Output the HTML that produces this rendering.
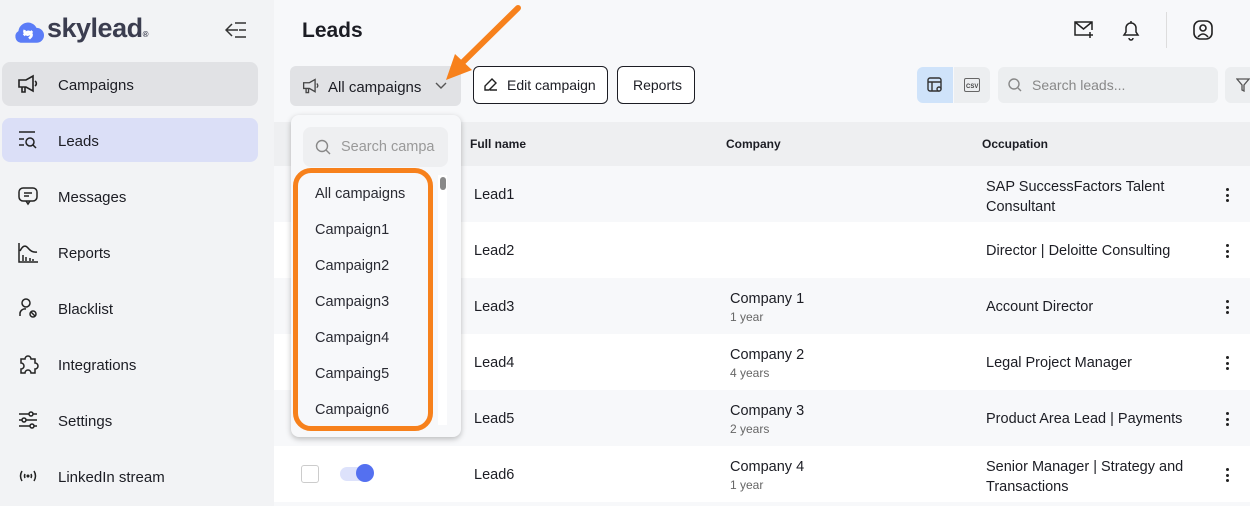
<!DOCTYPE html>
<html><head><meta charset="utf-8"><style>
*{box-sizing:border-box;margin:0;padding:0}
body{width:1250px;height:506px;overflow:hidden;background:#f7f8fa;font-family:"Liberation Sans",sans-serif;color:#1c1d24;position:relative}
.side{position:absolute;left:0;top:0;width:274px;height:506px;background:#f2f3f5}
.nav{position:absolute;left:2px;width:256px;height:44px;border-radius:8px;font-size:15px;display:flex;align-items:center;padding-left:56px;padding-top:2px}
.nav svg{position:absolute;left:15px;top:11px}
.abs{position:absolute}
.btn{position:absolute;top:66px;height:38px;border:1px solid #1c1d24;border-radius:6px;font-size:14px;display:flex;align-items:center;background:#fff}
.row{position:absolute;left:274px;width:976px;height:56px}
.t{position:absolute;font-size:14.5px}
.s{position:absolute;font-size:12px;color:#666}
.dots{position:absolute;left:1226px;width:4px}
.dots i{display:block;width:3px;height:3px;background:#222;border-radius:50%;margin-bottom:2.5px}
.dd{position:absolute;font-size:14.5px;left:315px;color:#2a2b33}
</style></head><body>
<div class="side">
 <svg class="abs" style="left:12px;top:16px" width="32" height="28" viewBox="0 0 30 26"><path d="M8 25h15a7 7 0 0 0 0-14 9 9 0 0 0-17 3A6 6 0 0 0 8 25z" fill="#5b7cf7"/><path d="M11 18l3-3a3 3 0 0 1 4 4l-2 2M19 14l-3 3a3 3 0 0 1-4-4" stroke="#fff" stroke-width="2.4" fill="none"/></svg>
 <div class="abs" style="left:47px;top:13px;font-size:27px;font-weight:bold;color:#3b3d4f;letter-spacing:-0.5px">skylead<span style="font-size:8px">®</span></div>
 <svg class="abs" style="left:225px;top:22px" width="22" height="16" viewBox="0 0 22 16" fill="none" stroke="#333" stroke-width="1.5"><path d="M7 2L1 8l6 6M1 8h12M10 1h11M14 8h7M10 15h11"/></svg>
 <div class="nav" style="top:62px;background:#e1e2e5"><svg width="22" height="22" viewBox="0 0 22 22" fill="none" stroke="#222" stroke-width="1.6"><path d="M2 7h7l7-4v15l-7-4H2zM5 14v5h3v-5M18 8a3 3 0 0 1 0 5"/></svg>Campaigns</div>
 <div class="nav" style="top:118px;background:#dbdff7"><svg width="22" height="22" viewBox="0 0 22 22" fill="none" stroke="#222" stroke-width="1.5"><path d="M2 3h16M2 10h5M2 16h5"/><circle cx="13" cy="13" r="4"/><path d="M16 16l3 3"/></svg>Leads</div>
 <div class="nav" style="top:174px"><svg width="22" height="22" viewBox="0 0 22 22" fill="none" stroke="#222" stroke-width="1.5"><rect x="2" y="3" width="18" height="13" rx="4"/><path d="M7 8h8M7 11h5M9 16l2 3 2-3"/></svg>Messages</div>
 <div class="nav" style="top:230px"><svg width="22" height="22" viewBox="0 0 22 22" fill="none" stroke="#222" stroke-width="1.5"><path d="M2 2v19h19M3 10q4-8 8-3t9 4M6 20v-6M9 20v-4M13 20v-3M16 20v-2"/></svg>Reports</div>
 <div class="nav" style="top:286px"><svg width="22" height="22" viewBox="0 0 22 22" fill="none" stroke="#222" stroke-width="1.5"><circle cx="9" cy="6" r="4"/><path d="M3 19v-3a5 5 0 0 1 6-4"/><circle cx="16" cy="17" r="3"/><path d="M14 15l4 4"/></svg>Blacklist</div>
 <div class="nav" style="top:342px"><svg width="22" height="22" viewBox="0 0 22 22" fill="none" stroke="#222" stroke-width="1.5"><path d="M4 6h4a3 3 0 0 1 6 0h4v4a3 3 0 0 1 0 6v4h-4a3 3 0 0 0-6 0H4v-4a3 3 0 0 0 0-6z"/></svg>Integrations</div>
 <div class="nav" style="top:398px"><svg width="22" height="22" viewBox="0 0 22 22" fill="none" stroke="#222" stroke-width="1.5"><path d="M2 5h18M2 11h18M2 17h18"/><circle cx="14" cy="5" r="2" fill="#f2f3f5"/><circle cx="7" cy="11" r="2" fill="#f2f3f5"/><circle cx="15" cy="17" r="2" fill="#f2f3f5"/></svg>Settings</div>
 <div class="nav" style="top:454px"><svg width="22" height="22" viewBox="0 0 22 22" fill="none" stroke="#222" stroke-width="1.5"><path d="M5 6q-3 5 0 10M17 6q3 5 0 10M8 9q-1 2 0 4M14 9q1 2 0 4"/><circle cx="11" cy="11" r="0.8" fill="#222"/></svg>LinkedIn stream</div>
</div>

<div class="abs" style="left:302px;top:19px;font-size:21px;font-weight:bold">Leads</div>
<svg class="abs" style="left:1073px;top:20px" width="22" height="20" viewBox="0 0 22 20" fill="none" stroke="#222" stroke-width="1.5"><path d="M14 15H2V2h17v8M2 2l8.5 7L19 2M17 12v6M14 15h6"/></svg>
<svg class="abs" style="left:1121px;top:19px" width="20" height="22" viewBox="0 0 20 22" fill="none" stroke="#222" stroke-width="1.5"><path d="M3 16h14l-2-3V9a5 5 0 0 0-10 0v4zM8 19a2 2 0 0 0 4 0M10 2v2"/></svg>
<div class="abs" style="left:1166px;top:12px;width:1px;height:36px;background:#ddd"></div>
<svg class="abs" style="left:1192px;top:19px" width="22" height="22" viewBox="0 0 22 22" fill="none" stroke="#222" stroke-width="1.6"><rect x="2" y="2" width="18" height="18" rx="6"/><circle cx="11" cy="9" r="3"/><path d="M6 18q5-6 10 0"/></svg>

<div class="abs" style="left:290px;top:66px;width:171px;height:40px;background:#e1e2e5;border-radius:6px;font-size:15px;display:flex;align-items:center;padding-left:38px;padding-top:2px">All campaigns</div>
<svg class="abs" style="left:302px;top:77px" width="18" height="18" viewBox="0 0 22 22" fill="none" stroke="#444" stroke-width="1.6"><path d="M2 7h7l7-4v15l-7-4H2zM5 14v5h3v-5M18 8a3 3 0 0 1 0 5"/></svg>
<svg class="abs" style="left:435px;top:82px" width="12" height="8" viewBox="0 0 12 8" fill="none" stroke="#555" stroke-width="1.4"><path d="M1 1l5 5 5-5"/></svg>
<div class="btn" style="left:473px;width:135px;padding-left:33px">Edit campaign</div>
<svg class="abs" style="left:483px;top:77px" width="15" height="15" viewBox="0 0 15 15" fill="none" stroke="#222" stroke-width="1.4"><path d="M9 2l4 4-7 7H2V9zM7 13h7"/></svg>
<div class="btn" style="left:617px;width:78px;padding-left:15px">Reports</div>

<div class="abs" style="left:917px;top:67px;width:36px;height:36px;background:#cfe3fa;border-radius:6px 0 0 6px"></div>
<div class="abs" style="left:954px;top:67px;width:36px;height:36px;background:#eceef0;border-radius:0 6px 6px 0"></div>
<svg class="abs" style="left:927px;top:77px" width="16" height="16" viewBox="0 0 16 16" fill="none" stroke="#333" stroke-width="1.4"><rect x="1" y="1" width="13" height="13" rx="2"/><path d="M1 5h13M5 5v9"/><circle cx="12" cy="12" r="2" fill="#cfe3fa"/></svg>
<div class="abs" style="left:964px;top:78px;font-size:6px;font-weight:bold;color:#444;border:1px solid #666;border-radius:2px;padding:5px 1px 1px">CSV</div>
<div class="abs" style="left:998px;top:67px;width:220px;height:36px;background:#eceef0;border-radius:6px;font-size:14px;color:#888;padding:10px 0 0 34px">Search leads...</div>
<svg class="abs" style="left:1008px;top:78px" width="14" height="14" viewBox="0 0 14 14" fill="none" stroke="#888" stroke-width="1.4"><circle cx="6" cy="6" r="5"/><path d="M10 10l3 3"/></svg>
<div class="abs" style="left:1225px;top:67px;width:30px;height:36px;background:#eceef0;border-radius:6px"></div>
<svg class="abs" style="left:1236px;top:78px" width="14" height="14" viewBox="0 0 14 14" fill="none" stroke="#555" stroke-width="1.3"><path d="M1 1h12L8 7v6l-2-1V7z"/></svg>

<div class="row" style="top:122px;height:44px;background:#eeeff1"></div>
<div class="t" style="left:470px;top:137px;font-size:12px;font-weight:bold">Full name</div>
<div class="t" style="left:726px;top:137px;font-size:12px;font-weight:bold">Company</div>
<div class="t" style="left:982px;top:137px;font-size:12px;font-weight:bold">Occupation</div>

<div class="row" style="top:166px;background:#f7f8fa"></div>
<div class="row" style="top:222px;background:#fff"></div>
<div class="row" style="top:278px;background:#f7f8fa"></div>
<div class="row" style="top:334px;background:#fff"></div>
<div class="row" style="top:390px;background:#f7f8fa"></div>
<div class="row" style="top:446px;background:#fff"></div>

<div class="t" style="left:474px;top:187px">Lead1</div>
<div class="t" style="left:474px;top:243px">Lead2</div>
<div class="t" style="left:474px;top:299px">Lead3</div>
<div class="t" style="left:474px;top:355px">Lead4</div>
<div class="t" style="left:474px;top:411px">Lead5</div>
<div class="t" style="left:474px;top:467px">Lead6</div>

<div class="t" style="left:730px;top:291px">Company 1</div><div class="s" style="left:730px;top:310px">1 year</div>
<div class="t" style="left:730px;top:347px">Company 2</div><div class="s" style="left:730px;top:366px">4 years</div>
<div class="t" style="left:730px;top:403px">Company 3</div><div class="s" style="left:730px;top:422px">2 years</div>
<div class="t" style="left:730px;top:459px">Company 4</div><div class="s" style="left:730px;top:478px">1 year</div>

<div class="t" style="left:986px;top:177px;line-height:20px">SAP SuccessFactors Talent<br>Consultant</div>
<div class="t" style="left:986px;top:243px">Director | Deloitte Consulting</div>
<div class="t" style="left:986px;top:299px">Account Director</div>
<div class="t" style="left:986px;top:355px">Legal Project Manager</div>
<div class="t" style="left:986px;top:411px">Product Area Lead | Payments</div>
<div class="t" style="left:986px;top:457px;line-height:20px">Senior Manager | Strategy and<br>Transactions</div>

<div class="dots" style="top:188px"><i></i><i></i><i></i></div>
<div class="dots" style="top:244px"><i></i><i></i><i></i></div>
<div class="dots" style="top:300px"><i></i><i></i><i></i></div>
<div class="dots" style="top:356px"><i></i><i></i><i></i></div>
<div class="dots" style="top:412px"><i></i><i></i><i></i></div>
<div class="dots" style="top:468px"><i></i><i></i><i></i></div>

<div class="abs" style="left:301px;top:465px;width:18px;height:18px;border:1px solid #ccc;border-radius:3px;background:#fff"></div>
<div class="abs" style="left:340px;top:467px;width:30px;height:14px;border-radius:7px;background:#dde2fb"></div>
<div class="abs" style="left:356px;top:464px;width:18px;height:18px;border-radius:50%;background:#5470f0"></div>

<div class="abs" style="left:291px;top:115px;width:170px;height:322px;background:#f7f8fa;border-radius:8px;box-shadow:0 2px 6px rgba(0,0,0,.25)"></div>
<div class="abs" style="left:303px;top:127px;width:145px;height:40px;background:#eeeff1;border-radius:8px;font-size:14.5px;color:#999;padding:12px 0 0 38px;overflow:hidden;white-space:nowrap">Search campa</div>
<svg class="abs" style="left:315px;top:139px" width="16" height="16" viewBox="0 0 16 16" fill="none" stroke="#888" stroke-width="1.4"><circle cx="7" cy="7" r="5.5"/><path d="M11 11l4 4"/></svg>
<div class="abs" style="left:438px;top:175px;width:9px;height:250px;background:#fff"></div>
<div class="abs" style="left:440px;top:177px;width:6px;height:13px;background:#888;border-radius:3px"></div>
<div class="dd" style="top:186px">All campaigns</div>
<div class="dd" style="top:222px">Campaign1</div>
<div class="dd" style="top:258px">Campaign2</div>
<div class="dd" style="top:294px">Campaign3</div>
<div class="dd" style="top:330px">Campaign4</div>
<div class="dd" style="top:366px">Campaing5</div>
<div class="dd" style="top:402px">Campaign6</div>
<div class="abs" style="left:293px;top:168px;width:140px;height:263px;border:5px solid #f7811c;border-radius:18px"></div>

<svg class="abs" style="left:0;top:0" width="1250" height="506"><path d="M518 8L462 63" stroke="#f7811c" stroke-width="6" stroke-linecap="round"/><path d="M446 80L455 54L472 70z" fill="#f7811c"/></svg>
</body></html>
